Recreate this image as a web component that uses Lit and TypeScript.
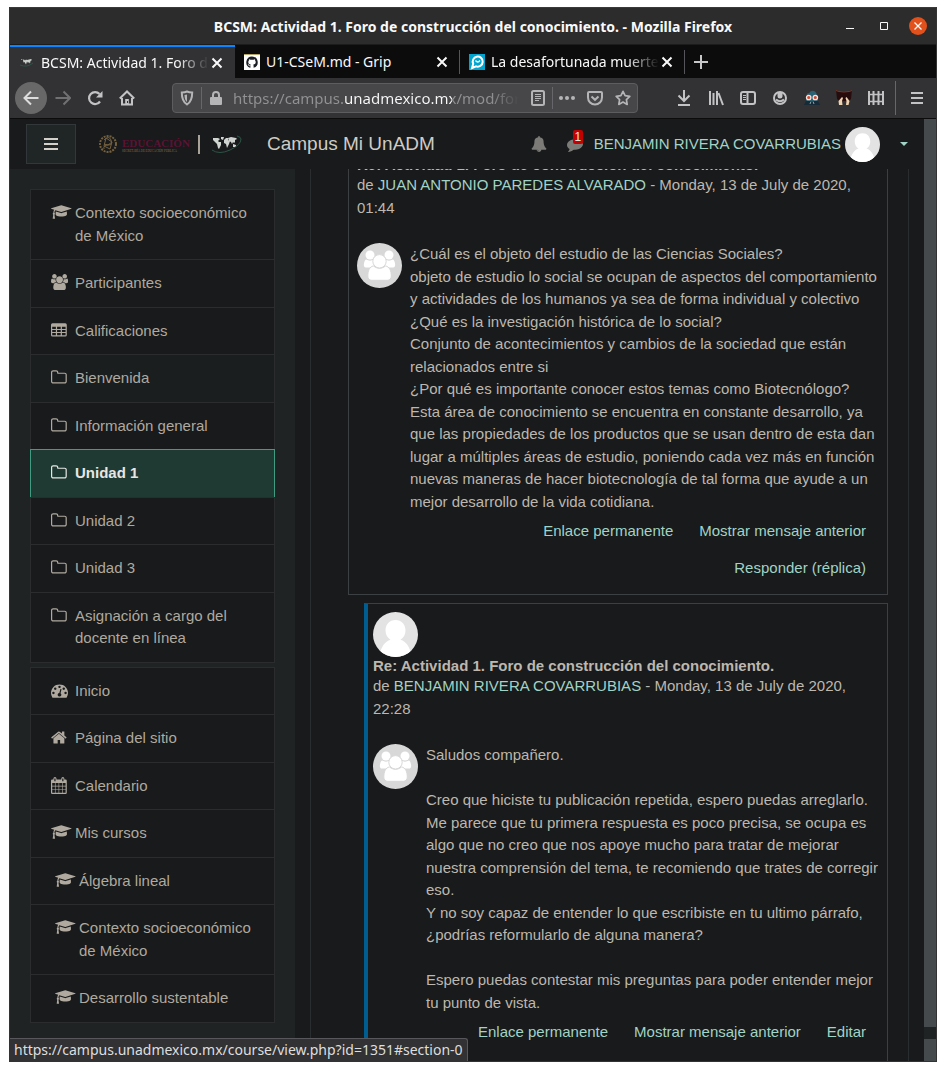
import { LitElement, html, svg, css, nothing } from "lit";
import { customElement, property, query } from "lit/decorators.js";
import { classMap } from "lit/directives/class-map.js";

const ICONS: Record<string, { w: number; body: unknown }> = {
  cap: {
    w: 2304,
    body: svg`<path d="M1774 836l18 316q4 69-82 128t-235 93.5-323 34.5-323-34.5-235-93.5-82-128l18-316 574 181q22 7 48 7t48-7zm530-324q0 23-22 31l-1120 352q-4 1-10 1t-10-1l-652-206q-43 34-71 111.5t-34 178.5q63 36 63 109 0 69-58 107l58 433q2 14-8 25-9 11-24 11h-192q-15 0-24-11-10-11-8-25l58-433q-58-38-58-107 0-73 65-111 11-207 98-330l-333-104q-22-8-22-31t22-31l1120-352q4-1 10-1t10 1l1120 352q22 8 22 31z"/>`,
  },
  users: {
    w: 1920,
    body: svg`<path d="M593 896q-162 5-265 128h-134q-82 0-138-40.5t-56-118.5q0-353 124-353 6 0 43.5 21t97.5 42.5 119 21.5q67 0 133-23-5 37-5 66 0 139 81 256zm1071 637q0 120-73 189.5t-194 69.5h-874q-121 0-194-69.5t-73-189.5q0-53 3.5-103.5t14-109 26.5-108.5 43-97.5 62-81 85.5-53.5 111.5-20q10 0 43 21.5t73 48 107 48 135 21.5 135-21.5 107-48 73-48 43-21.5q61 0 111.5 20t85.5 53.5 62 81 43 97.5 26.5 108.5 14 109 3.5 103.5zm-1024-1277q0 106-75 181t-181 75-181-75-75-181 75-181 181-75 181 75 75 181zm704 384q0 159-112.5 271.5t-271.5 112.5-271.5-112.5-112.5-271.5 112.5-271.5 271.5-112.5 271.5 112.5 112.5 271.5zm576 225q0 78-56 118.5t-138 40.5h-134q-103-123-265-128 81-117 81-256 0-29-5-66 66 23 133 23 59 0 119-21.5t97.5-42.5 43.5-21q124 0 124 353zm-128-609q0 106-75 181t-181 75-181-75-75-181 75-181 181-75 181 75 75 181z"/>`,
  },
  table: {
    w: 1792,
    body: svg`<path fill-rule="evenodd" d="M160 128h1344q160 0 160 160v1088q0 160-160 160h-1344q-160 0-160-160v-1088q0-160 160-160zM128 512v224h384v-224zM640 512v224h384v-224zM1152 512v224h384v-224zM128 832v224h384v-224zM640 832v224h384v-224zM1152 832v224h384v-224zM128 1152v256h384v-256zM640 1152v256h384v-256zM1152 1152v256h384v-256z"/>`,
  },
  folder: {
    w: 1792,
    body: svg`<path transform="translate(-64 0)" d="M1600 1312v-704q0-40-28-68t-68-28h-704q-40 0-68-28t-28-68v-64q0-40-28-68t-68-28h-320q-40 0-68 28t-28 68v960q0 40 28 68t68 28h1216q40 0 68-28t28-68zm128-704v704q0 92-66 158t-158 66h-1216q-92 0-158-66t-66-158v-960q0-92 66-158t158-66h320q92 0 158 66t66 158v32h672q92 0 158 66t66 158z"/>`,
  },
  gauge: {
    w: 1792,
    body: svg`<path d="M384 1152q0-53-37.5-90.5t-90.5-37.5-90.5 37.5-37.5 90.5 37.5 90.5 90.5 37.5 90.5-37.5 37.5-90.5zm192-448q0-53-37.5-90.5t-90.5-37.5-90.5 37.5-37.5 90.5 37.5 90.5 90.5 37.5 90.5-37.5 37.5-90.5zm428 481l101-382q6-26-7.5-48.5t-38.5-29.5-48 6.5-30 39.5l-101 382q-60 5-107 43.5t-63 98.5q-20 77 20 146t117 89 146-20 89-117q16-60-6-117t-72-91zm660-33q0-53-37.5-90.5t-90.5-37.5-90.5 37.5-37.5 90.5 37.5 90.5 90.5 37.5 90.5-37.5 37.5-90.5zm-640-640q0-53-37.5-90.5t-90.5-37.5-90.5 37.5-37.5 90.5 37.5 90.5 90.5 37.5 90.5-37.5 37.5-90.5zm448 192q0-53-37.5-90.5t-90.5-37.5-90.5 37.5-37.5 90.5 37.5 90.5 90.5 37.5 90.5-37.5 37.5-90.5zm320 448q0 261-141 483-19 29-54 29h-1402q-35 0-54-29-141-221-141-483 0-182 71-348t191-286 286-191 348-71 348 71 286 191 191 286 71 348z"/>`,
  },
  home: {
    w: 1792,
    body: svg`<path transform="translate(-64 0)" d="M1472 992v480q0 26-19 45t-45 19h-384v-384h-256v384h-384q-26 0-45-19t-19-45v-480q0-1 .5-3t.5-3l575-474 575 474q1 2 1 6zm223-69l-62 74q-8 9-21 11h-3q-13 0-21-7l-692-577-692 577q-12 8-24 7-13-2-21-11l-62-74q-8-10-7-23.5t11-21.5l719-599q32-26 76-26t76 26l244 204v-195q0-14 9-23t23-9h192q14 0 23 9t9 23v408l219 182q10 8 11 21.5t-7 23.5z"/>`,
  },
  calendar: {
    w: 1792,
    body: svg`<path fill-rule="evenodd" d="M128 256h128v-96q0-160 160-160t160 160v96h512v-96q0-160 160-160t160 160v96h128q128 0 128 128v1280q0 128-128 128h-1408q-128 0-128-128v-1280q0-128 128-128zM352 160v288h128v-288zM1184 160v288h128v-288zM128 640v288h288v-288zM480 640v288h320v-288zM864 640v288h320v-288zM1248 640v288h288v-288zM128 992v288h288v-288zM480 992v288h320v-288zM864 992v288h320v-288zM1248 992v288h288v-288zM128 1344v320h288v-320zM480 1344v320h320v-320zM864 1344v320h320v-320zM1248 1344v320h288v-320z"/>`,
  },
  bell: {
    w: 1792,
    body: svg`<path d="M912 1696q0-16-16-16-59 0-101.5-42.5t-42.5-101.5q0-16-16-16t-16 16q0 73 51.5 124.5t124.5 51.5q16 0 16-16zm816-288q0 52-38 90t-90 38h-448q0 106-75 181t-181 75-181-75-75-181h-448q-52 0-90-38t-38-90q50-42 91-88t85-119.5 74.5-158.5 50-206 19.5-260q0-152 117-282.5t307-158.5q-8-19-8-39 0-40 28-68t68-28 68 28 28 68q0 20-8 39 190 28 307 158.5t117 282.5q0 139 19.5 260t50 206 74.5 158.5 85 119.5 91 88z"/>`,
  },
  comment: {
    w: 1792,
    body: svg`<path d="M1792 896q0 174-120 321.5t-326 233-450 85.5q-70 0-145-8-198 175-460 242-49 14-114 22-17 2-30.5-9t-17.5-29q-3-9 .5-17t8-14 20-20.500 30-33 36-48 37.500-73.500 31-98.500q-141-80-216.500-197.500t-75.500-252.500q0-130 71-248.500t191-204.500 286-136.500 348-50.500 348 50.500 286 136.500 191 204.500 71 248.500z"/>`,
  },
};

const faIcon = (name: string, cls = "fa") =>
  html`<svg class="${cls} ${name}" viewBox="0 0 ${ICONS[name].w} 1792" aria-hidden="true">${ICONS[name].body}</svg>`;

const person = () => html`<svg class="avatar" viewBox="0 0 45 45" role="img" aria-label="Usuario">
  <clipPath id="disc"><circle cx="22.500" cy="22.500" r="22.500"/></clipPath>
  <g clip-path="url(#disc)">
    <rect width="45" height="45" fill="#e3e3e3"/>
    <path fill="#fff" d="M22.500 8c6 0 10 4.500 10 10.500 0 4-2 7.500-5 9.200 5.500 1.500 9.500 7 11.500 17.300H6c2-10.300 6-15.800 11.500-17.300-3-1.700-5-5.200-5-9.200C12.500 12.500 16.500 8 22.500 8z"/>
  </g>
</svg>`;

const group = () => html`<svg class="avatar" viewBox="0 0 45 45" role="img" aria-label="Grupo">
  <circle cx="22.500" cy="22.500" r="22.500" fill="#d8d8d8"/>
  <g fill="#fff">
    <circle cx="13" cy="12" r="4.500"/><circle cx="32" cy="12" r="4.500"/>
    <path d="M9 16.500c3 1.500 5 1.500 8 0v8H9c-2 0-2.500-2-2-4 .3-2 1-3.500 2-4zM36 16.500c-3 1.500-5 1.500-8 0v8h8c2 0 2.500-2 2-4-.3-2-1-3.500-2-4z"/>
    <g stroke="#d8d8d8" stroke-width="1">
      <path d="M16.500 23c4 3 8 3 12 0 4 .5 5.800 5 5.800 10 0 2.600-1.500 4.300-4 4.300H14.800c-2.500 0-4-1.700-4-4.300 0-5 1.700-9.500 5.700-10z"/>
      <circle cx="22.500" cy="18.300" r="6.700"/>
    </g>
  </g>
</svg>`;

interface NavEntry { icon: string; label: string; state?: "active" | "hover" | "child"; }

const COURSE: NavEntry[] = [
  { icon: "cap", label: "Contexto socioeconómico de México" },
  { icon: "users", label: "Participantes" },
  { icon: "table", label: "Calificaciones" },
  { icon: "folder", label: "Bienvenida", state: "hover" },
  { icon: "folder", label: "Información general" },
  { icon: "folder", label: "Unidad 1", state: "active" },
  { icon: "folder", label: "Unidad 2" },
  { icon: "folder", label: "Unidad 3" },
  { icon: "folder", label: "Asignación a cargo del docente en línea" },
];

const SITE: NavEntry[] = [
  { icon: "gauge", label: "Inicio" },
  { icon: "home", label: "Página del sitio" },
  { icon: "calendar", label: "Calendario" },
  { icon: "cap", label: "Mis cursos" },
  { icon: "cap", label: "Álgebra lineal", state: "child" },
  { icon: "cap", label: "Contexto socioeconómico de México", state: "child" },
  { icon: "cap", label: "Desarrollo sustentable", state: "child" },
];

@customElement("window-chrome")
class WindowChrome extends LitElement {
  static styles = css`
    :host { display: block; font-family: "Noto Sans", "Open Sans", sans-serif; font-size: 14px; color: #f9f9fa; }
    * { box-sizing: border-box; }
    button { border: 0; padding: 0; background: none; color: inherit; font: inherit; display: grid; place-items: center; flex: none; }
    svg { display: block; fill: none; stroke: currentColor; stroke-width: 2; }
    .title { display: grid; grid-template-columns: 106px 1fr 106px; align-items: center; height: 38px; background: #2c2c2c; border-top: 1px solid #3a3a3a; border-bottom: 1px solid #1c1c1c; }
    .title h1 { grid-column: 2; margin: 0; font-size: 14px; font-weight: 700; text-align: center; white-space: nowrap; overflow: hidden; }
    .controls { display: flex; justify-content: flex-end; align-items: center; gap: 16px; padding-right: 9px; }
    .controls button { width: 18px; height: 18px; }
    .controls .close { background: #e2501b; border-radius: 50%; }
    .tabs { display: flex; height: 33px; background: #0c0c0d; }
    .tab { display: flex; align-items: center; flex: 0 1 225px; min-width: 0; padding: 0 10px 0 9px; }
    .tab.idle { background: linear-gradient(#55555a, #55555a) right 5px / 1px 24px no-repeat; }
    .tab.active { background: #323234; border-top: 2px solid #0a84ff; }
    .tab span { flex: 1; overflow: hidden; white-space: nowrap; line-height: 24px; mask-image: linear-gradient(90deg, #000 calc(100% - 32px), transparent); }
    .tab.short span { mask-image: none; }
    .tab .x { width: 16px; height: 16px; }
    .fav { width: 16px; height: 16px; flex: none; margin-right: 6px; }
    .new { width: 32px; color: #c8c8ca; }
    .bar { display: flex; align-items: center; height: 41px; background: #323234; border-bottom: 1px solid #0c0c0d; padding: 0 3px 0 5px; color: #c3c3c5; }
    .bar > button { width: 32px; height: 32px; }
    .bar .back { background: #686869; border-radius: 50%; color: #dcdcdc; }
    .bar .off { color: #707072; }
    .url { display: flex; align-items: center; flex: 1; min-width: 0; height: 30px; margin: 0 30px 0 29px; background: #474749; border: 1px solid #5d5d60; border-radius: 4px; color: #b5b5b7; }
    .url button { width: 28px; height: 28px; }
    .rule { width: 1px; height: 22px; background: #67676b; flex: none; }
    .url input { flex: 1; min-width: 0; height: 28px; padding: 0; border: 0; outline: 0; margin-left: 3px; margin-right: 5px; font: inherit; font-size: 15px; color: transparent; background: linear-gradient(90deg, #929294 111px, #f9f9fa 111px 219px, #929294 219px calc(100% - 28px), transparent); background-clip: text; -webkit-background-clip: text; }
    .tall { height: 34px; margin: 0 5px 0 3px; }
  `;
  render() {
    const x = svg`<path d="M3.500 3.500l9 9m0-9l-9 9"/>`;
    const globe = html`<svg class="fav" viewBox="0 0 16 16"><path fill="#c9cfcb" stroke="none" d="M2 5l3-.5 1 1 1-1 1 .5 4-1 1 1-1.500 1-.5 2.500-1.200-1.500-.8 1-1-1.500-1 3-1.500-2.500-1 .5-.5-2.500-1.500-1z"/><path stroke="#2d5446" stroke-width="1" d="M1 10q7 3 13-2"/></svg>`;
    return html`
      <header class="title">
        <h1>BCSM: Actividad 1. Foro de construcción del conocimiento. - Mozilla Firefox</h1>
        <div class="controls">
          <button aria-label="Minimizar"><svg width="18" height="18" viewBox="0 0 18 18"><path stroke-width="1" d="M5 11.500h8"/></svg></button>
          <button aria-label="Maximizar"><svg width="18" height="18" viewBox="0 0 18 18"><path stroke-width="1" d="M5.500 5.500h7v7h-7z"/></svg></button>
          <button class="close" aria-label="Cerrar"><svg width="18" height="18" viewBox="0 0 18 18"><path stroke-width="1.300" d="M5.500 5.500l7 7m0-7l-7 7"/></svg></button>
        </div>
      </header>
      <nav class="tabs" aria-label="Pestañas">
        <div class="tab active">${globe}<span>BCSM: Actividad 1. Foro de construcción</span>
          <button class="x" aria-label="Cerrar pestaña"><svg width="16" height="16" viewBox="0 0 16 16">${x}</svg></button></div>
        <div class="tab idle short">
          <svg class="fav" viewBox="0 0 16 16"><rect width="16" height="16" fill="#fff" stroke="none"/><path stroke="#b5a46a" stroke-width="1" d="M0 .5h16"/><path fill="#1b1f23" stroke="none" d="M8 2.500a5.800 5.800 0 0 0-2 11.200c.3 0 .4-.1.400-.3v-1.300c-1.500.3-1.900-.6-2.100-1.100l-.5-.6c.8-.2 1.100.5 1.400.8.400.5 1 .4 1.300.2l.3-.7c-1.400-.2-2.500-.8-2.500-2.600 0-.6.2-1.100.6-1.500l.1-1.400c.5-.1 1 .2 1.500.5h3c.5-.3 1-.6 1.500-.5l.1 1.400c.4.4.6.9.6 1.500 0 1.800-1.100 2.400-2.500 2.600.3.300.4.700.4 1.300v1.400c0 .2.100.3.400.3A5.800 5.800 0 0 0 8 2.500z"/></svg>
          <span>U1-CSeM.md - Grip</span>
          <button class="x" aria-label="Cerrar pestaña"><svg width="16" height="16" viewBox="0 0 16 16">${x}</svg></button></div>
        <div class="tab idle">
          <svg class="fav" viewBox="0 0 16 16"><rect width="16" height="16" fill="#00a5cf" stroke="none"/><path stroke="#fff" d="M3 14l1.200-4.200a5 5 0 1 1 3 2.600z"/><path stroke="#fff" stroke-width="1.300" d="M6.500 6.500q2.200 3 4.500 0"/></svg>
          <span>La desafortunada muerte de</span>
          <button class="x" aria-label="Cerrar pestaña"><svg width="16" height="16" viewBox="0 0 16 16">${x}</svg></button></div>
        <button class="new" aria-label="Pestaña nueva"><svg width="16" height="16" viewBox="0 0 16 16"><path d="M8 1v14M1 8h14"/></svg></button>
      </nav>
      <div class="bar">
        <button class="back" aria-label="Atrás"><svg width="16" height="16" viewBox="0 0 16 16"><path d="M15.500 8H1.500M8 1.500L1.500 8 8 14.500"/></svg></button>
        <button class="off" aria-label="Adelante"><svg width="16" height="16" viewBox="0 0 16 16"><path d="M.5 8h14M8.500 1.500L15 8l-6.500 6.500"/></svg></button>
        <button aria-label="Recargar"><svg width="16" height="16" viewBox="0 0 16 16"><path stroke-width="2.200" d="M13 11.500A6 6 0 1 1 12.500 4"/><path fill="currentColor" stroke="none" d="M15.500 1v6.500H9z"/></svg></button>
        <button aria-label="Inicio"><svg width="16" height="16" viewBox="0 0 16 16"><path d="M.8 8.500L8 1.500l7.200 7M3 8v6.500h10V8"/><path fill="currentColor" stroke="none" d="M6.200 9h3.600v6H6.200z"/><path stroke="#323234" stroke-width="1" d="M8.500 11v2"/></svg></button>
        <div class="url">
          <button aria-label="Protección"><svg width="16" height="16" viewBox="0 0 16 16"><path d="M8 1.500c2 1 4 1 5.200 1 0 6-1 9.500-5.200 12C3.800 12 2.800 8.500 2.800 2.500 4 2.500 6 2.500 8 1.500z"/><path fill="currentColor" stroke="none" d="M8 4.500v7.500c-1.800-1.500-2.400-3.500-2.500-7 1 0 1.800-.2 2.500-.5z"/></svg></button>
          <i class="rule"></i>
          <button aria-label="Conexión segura"><svg width="16" height="16" viewBox="0 0 16 16"><path d="M5 8V5a3 3 0 0 1 6 0v3"/><rect x="2" y="7" width="12" height="8" rx="1" fill="currentColor" stroke="none"/></svg></button>
          <input aria-label="Dirección" value="https://campus.unadmexico.mx/mod/forum" />
          <button aria-label="Vista de lectura"><svg width="16" height="16" viewBox="0 0 16 16"><rect x="2" y="1" width="12" height="14" rx="1.500"/><path stroke-width="1" d="M5 4.500h6M5 6.500h6M5 8.500h6M5 10.500h4"/></svg></button>
          <i class="rule"></i>
          <button aria-label="Acciones"><svg width="18" height="16" viewBox="0 0 18 16"><g fill="currentColor" stroke="none"><circle cx="3" cy="8" r="2"/><circle cx="9" cy="8" r="2"/><circle cx="15" cy="8" r="2"/></g></svg></button>
          <button aria-label="Pocket"><svg width="16" height="16" viewBox="0 0 16 16"><path d="M2 2h12q1 0 1 1v4.500a7 7 0 0 1-14 0V3q0-1 1-1z"/><path d="M4.500 6.500L8 9.800l3.500-3.300"/></svg></button>
          <button aria-label="Marcador"><svg width="16" height="16" viewBox="0 0 16 16"><path stroke-width="1.700" stroke-linejoin="round" d="M8 1.300l2.100 4.400 4.700.6-3.400 3.300.8 4.800L8 12.100l-4.200 2.300.8-4.800L1.200 6.300l4.700-.6z"/></svg></button>
        </div>
        <button aria-label="Descargas"><svg width="16" height="16" viewBox="0 0 16 16"><path d="M8 0v10M2.500 5.500L8 11l5.500-5.500M2 15h12"/></svg></button>
        <button aria-label="Biblioteca"><svg width="16" height="16" viewBox="0 0 16 16"><path d="M2 1v14M5.500 3v12M9 1v14M10.500 3l4.500 12"/></svg></button>
        <button aria-label="Barra lateral"><svg width="16" height="16" viewBox="0 0 16 16"><rect x="1" y="2" width="14" height="12" rx="2"/><path d="M7.500 2v12"/><path stroke-width="1" d="M3 5.500h3M3 7.500h3M3 9.500h3"/></svg></button>
        <button aria-label="Cuenta"><svg width="16" height="16" viewBox="0 0 16 16"><circle cx="8" cy="8" r="6"/><path fill="currentColor" stroke="none" d="M5.500 3h5v3.500a2.500 2 0 0 1-5 0z"/><path d="M4 9.500q4 3.500 8 0"/></svg></button>
        <button aria-label="Extensión"><svg width="16" height="16" viewBox="0 0 16 16"><path fill="#2b6274" stroke="none" d="M3 7q-1-3 1-4l1 .5Q6 0 10 1q3 1 3 6l1 5H2z"/><path fill="#162a38" stroke="none" d="M0 15l2-4h12l2 4z"/><circle cx="4.700" cy="7.500" r="2.200" fill="#d2492f" stroke="#f2e4df" stroke-width="1.300"/><circle cx="11.300" cy="7.500" r="2.200" fill="#d2492f" stroke="#f2e4df" stroke-width="1.300"/><path stroke="#8fa6ac" stroke-width="1" d="M7 11.500l-1 2.500M9 11.500l1 2.500"/></svg></button>
        <button aria-label="Extensión"><svg width="16" height="16" viewBox="0 0 16 16"><path fill="#260c0c" stroke="none" d="M0 0l3 1q5 1 10 0l3-1-1 9-2 2H3L1 9z"/><path fill="#efd2b0" stroke="none" d="M3 15l-.5-4L6 7l1 1-1 3 .5 4zM10 15l.5-4-1-3 1-1 3 4-1 4z"/><path stroke="#7a3a2a" stroke-width="1" d="M0 .5l3 1q5 1 10 0l3-1"/></svg></button>
        <button aria-label="Extensión"><svg width="16" height="16" viewBox="0 0 16 16"><path d="M1 1v14M5.500 1v14M10.500 1v14M15 1v14"/><path stroke-width="1.500" d="M0 4.500h16M0 11.500h16"/></svg></button>
        <i class="rule tall"></i>
        <button aria-label="Menú"><svg width="16" height="16" viewBox="0 0 16 16"><path d="M2 3h12M2 8h12M2 13h12"/></svg></button>
      </div>`;
  }
}

@customElement("nav-list")
class NavList extends LitElement {
  @property({ attribute: false }) entries: NavEntry[] = [];
  static styles = css`
    ul { margin: 0; padding: 0; list-style: none; border: 1px solid #2a2c2d; }
    li + li { border-top: 1px solid #2a2c2d; }
    a { display: grid; grid-template-columns: 24px 1fr; padding: 12px 20px; background: #181a1b; color: #b0a99f; text-decoration: none; line-height: 1.5; }
    .hover { background: #1a1e1f; }
    .child { padding-left: 24px; padding-right: 16px; }
    .active { margin: -1px -1px 0; padding: 13px 21px 12px; background: #1f3a32; color: #e8e6e3; font-weight: 700; box-shadow: inset 1px 1px #3f9c80, inset -1px 0 #3f9c80; }
    .fa { height: 17px; margin-top: 2px; fill: currentColor; }
    .cap, .users { height: 16px; }
  `;
  render() {
    return html`<ul>${this.entries.map((e) => html`<li>
      <a href="#" class=${classMap({ [e.state ?? "plain"]: true })}>${faIcon(e.icon)}<span>${e.label}</span></a>
    </li>`)}</ul>`;
  }
}

@customElement("forum-post")
class ForumPost extends LitElement {
  @property() author = "";
  @property() date = "";
  @property({ attribute: false }) lines: string[] = [];
  @property({ attribute: false }) actions: string[] = [];
  @property({ type: Boolean, reflect: true }) reply = false;
  static styles = css`
    :host { display: block; border: 1px solid #3c4043; padding: 8px; line-height: 1.5; color: #bdb7af; }
    :host([reply]) { border-left: 4px solid #005d8f; padding: 8px 8px 64px 5px; }
    .avatar { display: block; width: 45px; height: 45px; }
    h2 { margin: 0; font-size: 15px; line-height: 18px; }
    header { margin-bottom: 24px; }
    a { color: #a1d3c6; text-decoration: none; }
    .row { display: grid; grid-template-columns: 45px 1fr; column-gap: 8px; }
    p { margin: 0; min-height: 1lh; }
    footer { display: flex; flex-wrap: wrap; justify-content: flex-end; }
    footer a { padding: 7px 13px; }
  `;
  render() {
    return html`<article>
      <header>
        ${person()}
        <h2>Re: Actividad 1. Foro de construcción del conocimiento.</h2>
        <div>de <a href="#">${this.author}</a> - ${this.date}</div>
      </header>
      <div class="row">${group()}<div>
        ${this.lines.map((l) => html`<p>${l || nothing}</p>`)}
        <footer>${this.actions.map((a) => html`<a href="#">${a}</a>`)}</footer>
      </div></div>
    </article>`;
  }
}

@customElement("app-root")
class AppRoot extends LitElement {
  @query(".scroller") scroller!: HTMLElement;
  static styles = css`
    * { box-sizing: border-box; }
    :host { display: block; height: 100vh; padding: 7px 9px 9px; box-sizing: border-box; overflow: hidden; background: #fff; font-family: "Liberation Sans", Arial, sans-serif; font-size: 15px; line-height: 1.5; }
    .window { position: relative; display: flex; flex-direction: column; height: 100%; border: 1px solid #333; border-top: 0; background: #181a1b; overflow: hidden; }
    .view { display: flex; flex: 1; min-height: 0; }
    .page { display: flex; flex-direction: column; flex: 1; min-width: 0; }
    .track { display: flex; flex-direction: column; justify-content: space-between; width: 12px; background: #202324; }
    .thumb { flex: 1; background: #454a4d; }
    .end { height: 22px; margin-top: 12px; background: #454a4d; }
    .top { display: flex; align-items: center; height: 50px; flex: none; padding: 0 16px; }
    button { font: inherit; padding: 0; background: none; border: 0; }
    .burger { display: grid; place-items: center; width: 50px; height: 40px; background: #202526; border: 1px solid #32383a; }
    .logo { width: 148px; height: 32px; margin-left: 21px; }
    .brand { flex: 1; margin-left: 22px; font-size: 19px; color: #cfcbc5; white-space: nowrap; }
    .tool { position: relative; display: grid; justify-items: center; width: 34px; margin-right: 2px; }
    .icon { height: 16px; fill: #7c7b77; }
    .badge { position: absolute; left: 15px; top: -6px; width: 10px; height: 14px; border-radius: 2px; background: #c40000; color: #e8e6e3; font-size: 12px; line-height: 14px; text-align: center; }
    .user { display: flex; align-items: center; gap: 4px; color: #a1d3c6; text-decoration: none; white-space: nowrap; }
    .avatar { width: 35px; height: 35px; }
    .caret { width: 8px; height: 4px; margin-left: 16px; fill: #a1d3c6; }
    .body { display: flex; flex: 1; min-height: 0; }
    aside { display: flex; flex-direction: column; gap: 4px; flex: none; width: 285px; padding: 20px; background: #1f2324; }
    .scroller { flex: 1; min-width: 0; overflow-y: auto; scrollbar-width: none; padding: 0 15px; }
    .card { padding: 16px 20px 0 21px; border: solid #2a2d2f; border-width: 0 1px; }
    .thread { display: grid; gap: 8px; margin-left: 16px; }
    .thread > [reply] { margin-left: 16px; }
    .status { position: absolute; left: 0; bottom: 0; padding: 0 4px; border: 1px solid #58585c; border-width: 1px 1px 0 0; border-top-right-radius: 3px; background: #323234; color: #dededf; font: 14px/22px "Noto Sans", "Open Sans", sans-serif; }
  `;
  firstUpdated() {
    requestAnimationFrame(() => { this.scroller.scrollTop = 83; });
  }
  render() {
    return html`<div class="window">
      <window-chrome></window-chrome>
      <div class="view">
        <div class="page">
          <header class="top">
            <button class="burger" aria-label="Panel lateral"><svg width="14" height="12" viewBox="0 0 14 12"><path stroke="#d3cfc9" stroke-width="2" d="M0 1h14M0 6h14M0 11h14"/></svg></button>
            <svg class="logo" viewBox="0 0 148 32" role="img" aria-label="Educación y UnADM">
              <g fill="none" stroke="#75613f"><circle cx="11" cy="16" r="8" stroke-width="2" stroke-dasharray="2 1"/><path d="M7 12q5-5 7 0t-3 5-4 4M9 10l6 4-2 7-6-3zM7 16l4 1 4-3"/></g>
              <text x="25" y="19" font-family="Liberation Serif" font-weight="700" font-size="11" fill="#5d1234">EDUCACIÓN</text>
              <text x="25" y="24" font-family="Liberation Serif" font-size="3" fill="#8a744b">SECRETARÍA DE EDUCACIÓN PÚBLICA</text>
              <path stroke="#a9a299" stroke-width="2" d="M102 7v19"/>
              <g fill="#d0d4d1"><path d="M116 10h5l2 1-2 2 1 1 2 0 0 3-2 4-1-1-1-4-2-2-2-2z"/><path d="M124 9l3 0-1 3-2-1zM127 12l2-2 2 0 0 2 2 1-1 3-2 4-1-4-2-1z"/><path d="M131 10l3-1 5 1 1 1-2 1 0 2-1 1-1-1-1 2-1-2-2-1zM136 16l3 1 0 2-3 0z"/></g>
              <path fill="none" stroke="#2d5446" d="M115 22q7 5 18 0t11-11q0-2-4-3"/>
            </svg>
            <div class="brand">Campus Mi UnADM</div>
            <button class="tool" aria-label="Notificaciones">${faIcon("bell", "icon")}</button>
            <button class="tool" aria-label="Mensajes">${faIcon("comment", "icon")}<span class="badge">1</span></button>
            <a class="user" href="#">BENJAMIN RIVERA COVARRUBIAS ${person()}<svg class="caret" viewBox="0 0 8 4"><path d="M0 0h8L4 4z"/></svg></a>
          </header>
          <div class="body">
            <aside>
              <nav-list .entries=${COURSE}></nav-list>
              <nav-list .entries=${SITE}></nav-list>
            </aside>
            <main class="scroller"><div class="card"><div class="thread">
              <forum-post author="JUAN ANTONIO PAREDES ALVARADO" date="Monday, 13 de July de 2020, 01:44"
                .lines=${[
                  "¿Cuál es el objeto del estudio de las Ciencias Sociales?",
                  "objeto de estudio lo social se ocupan de aspectos del comportamiento y actividades de los humanos ya sea de forma individual y colectivo",
                  "¿Qué es la investigación histórica de lo social?",
                  "Conjunto de acontecimientos y cambios de la sociedad que están relacionados entre si",
                  "¿Por qué es importante conocer estos temas como Biotecnólogo?",
                  "Esta área de conocimiento se encuentra en constante desarrollo, ya que las propiedades de los productos que se usan dentro de esta dan lugar a múltiples áreas de estudio, poniendo cada vez más en función nuevas maneras de hacer biotecnología de tal forma que ayude a un mejor desarrollo de la vida cotidiana.",
                ]}
                .actions=${["Enlace permanente", "Mostrar mensaje anterior", "Responder (réplica)"]}></forum-post>
              <forum-post reply author="BENJAMIN RIVERA COVARRUBIAS" date="Monday, 13 de July de 2020, 22:28"
                .lines=${[
                  "Saludos compañero.", "",
                  "Creo que hiciste tu publicación repetida, espero puedas arreglarlo.",
                  "Me parece que tu primera respuesta es poco precisa, se ocupa es algo que no creo que nos apoye mucho para tratar de mejorar nuestra comprensión del tema, te recomiendo que trates de corregir eso.",
                  "Y no soy capaz de entender lo que escribiste en tu ultimo párrafo, ¿podrías reformularlo de alguna manera?", "",
                  "Espero puedas contestar mis preguntas para poder entender mejor tu punto de vista.",
                ]}
                .actions=${["Enlace permanente", "Mostrar mensaje anterior", "Editar"]}></forum-post>
            </div></div></main>
          </div>
        </div>
        <div class="track"><div class="thumb"></div><div class="end"></div></div>
      </div>
      <div class="status">https://campus.unadmexico.mx/course/view.php?id=1351#section-0</div>
    </div>`;
  }
}
